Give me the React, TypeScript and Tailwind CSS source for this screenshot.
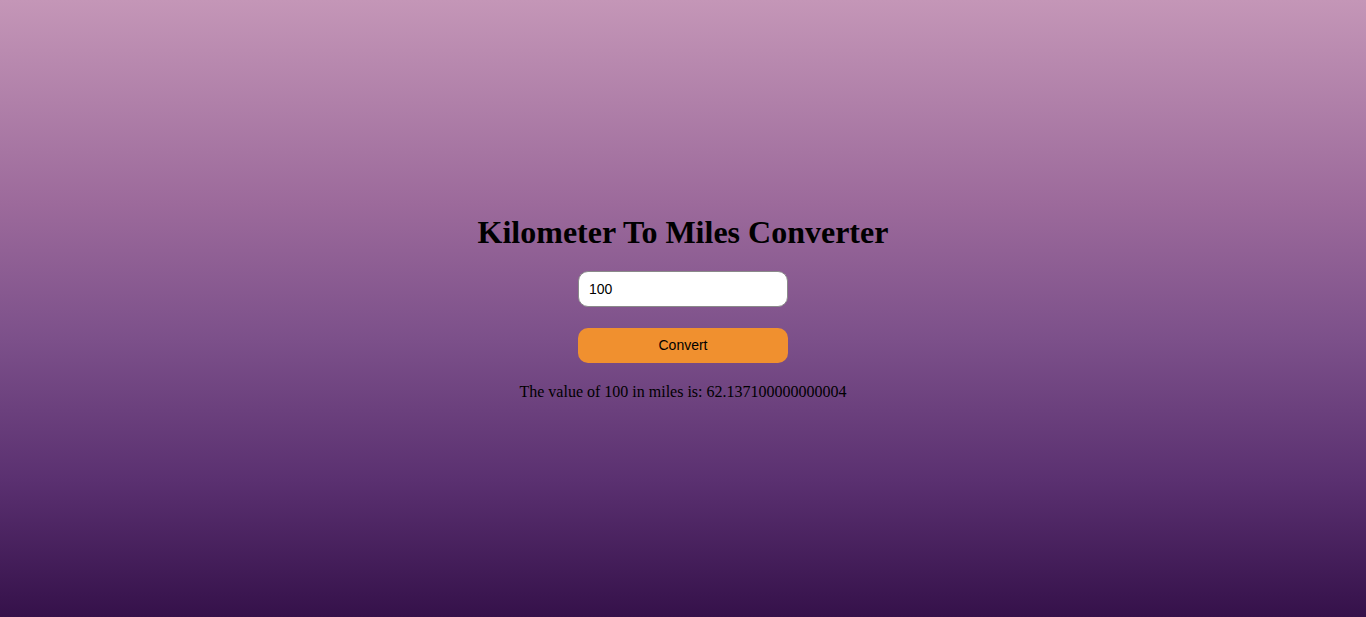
import React, { useState } from 'react';

export default function App() {
    const [km, setKm] = useState('100');
    const [result, setResult] = useState<string | null>(String(100 * 0.621371));

    const convert = () => {
        const value = parseFloat(km);
        if (isNaN(value)) return;
        setResult(String(value * 0.621371));
    };

    return (
        <div className="h-screen w-full flex flex-col items-center justify-center pb-[2px] bg-[linear-gradient(to_bottom,#c496b7_0%,#9c6a9b_33%,#7c508a_55%,#5a3070_78%,#35114a_100%)] font-['Liberation_Serif',serif] text-black">
            <h1 className="text-[32px] leading-[37px] font-bold">Kilometer To Miles Converter</h1>
            <input
                type="text"
                value={km}
                onChange={(e) => setKm(e.target.value)}
                className="mt-[20px] w-[210px] h-[36px] rounded-[10px] border border-[#8a8a8a] bg-white px-[10px] text-[14px] font-['Liberation_Sans',Arial,sans-serif] outline-none"
            />
            <button
                onClick={convert}
                className="mt-[21px] w-[210px] h-[35px] rounded-[10px] bg-[#f0902f] text-[14px] font-['Liberation_Sans',Arial,sans-serif] text-black"
            >
                Convert
            </button>
            {result !== null && (
                <p className="mt-[20px] text-[16px] leading-[18px]">
                    The value of {km} in miles is: {result}
                </p>
            )}
        </div>
    );
}
